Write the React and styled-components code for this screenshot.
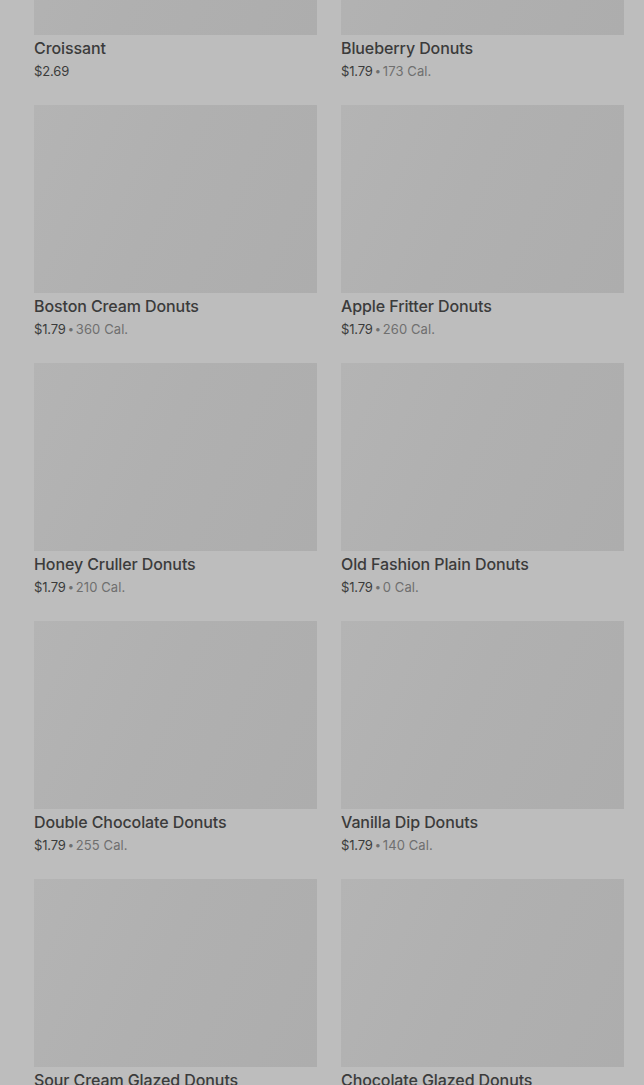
import React from "react";
import styled, { createGlobalStyle } from "styled-components";

const GlobalStyle = createGlobalStyle`
  html, body {
    margin: 0;
    padding: 0;
    background: #bdbdbd;
    font-family: "Inter", "Noto Sans", sans-serif;
    overflow: hidden;
  }
`;

const Page = styled.div`
  width: 644px;
  height: 1085px;
  overflow: hidden;
  background: #bdbdbd;
`;

const Grid = styled.div`
  display: grid;
  grid-template-columns: 283px 283px;
  column-gap: 24px;
  padding: 0 20px 0 34px;
  margin-top: -153px;
`;

const Card = styled.div`
  display: flex;
  flex-direction: column;
  height: 258px;
`;

const Thumb = styled.div`
  height: 188px;
  background: linear-gradient(115deg, #b4b4b4 0%, #b0b0b0 45%, #adadad 100%);
`;

const Name = styled.div`
  margin-top: 3px;
  font-size: 16px;
  line-height: 20px;
  font-weight: 500;
  color: #3b3b3b;
  letter-spacing: -0.1px;
`;

const Meta = styled.div`
  margin-top: 4px;
  font-size: 13px;
  line-height: 18px;
  color: #3b3b3b;
  letter-spacing: -0.15px;
`;

const Dot = styled.span`
  color: #6f6f6f;
  margin: 0 2px;
  font-size: 11px;
  vertical-align: 1px;
`;

const Cal = styled.span`
  color: #6f6f6f;
  letter-spacing: 0.1px;
`;

const items = [
  { name: "Croissant", price: "$2.69" },
  { name: "Blueberry Donuts", price: "$1.79", cal: "173 Cal." },
  { name: "Boston Cream Donuts", price: "$1.79", cal: "360 Cal." },
  { name: "Apple Fritter Donuts", price: "$1.79", cal: "260 Cal." },
  { name: "Honey Cruller Donuts", price: "$1.79", cal: "210 Cal." },
  { name: "Old Fashion Plain Donuts", price: "$1.79", cal: "0 Cal." },
  { name: "Double Chocolate Donuts", price: "$1.79", cal: "255 Cal." },
  { name: "Vanilla Dip Donuts", price: "$1.79", cal: "140 Cal." },
  { name: "Sour Cream Glazed Donuts", price: "$1.79", cal: "270 Cal." },
  { name: "Chocolate Glazed Donuts", price: "$1.79", cal: "240 Cal." },
];

const App = () => {
  return (
    <Page>
      <GlobalStyle />
      <Grid>
        {items.map((item, i) => (
          <Card key={i}>
            <Thumb />
            <Name>{item.name}</Name>
            <Meta>
              {item.price}
              {item.cal && (
                <>
                  <Dot>•</Dot>
                  <Cal>{item.cal}</Cal>
                </>
              )}
            </Meta>
          </Card>
        ))}
      </Grid>
    </Page>
  );
};

export default App;
